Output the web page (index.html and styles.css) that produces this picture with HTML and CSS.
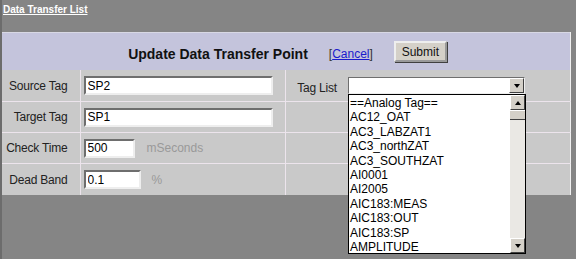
FILE: index.html
```html
<!DOCTYPE html>
<html lang="en">
<head>
    <meta charset="UTF-8">
    <title>Update Data Transfer Point</title>
    <link rel="stylesheet" href="styles.css">
</head>
<body>
    <a class="top-link" href="#">Data Transfer List</a>

    <table class="panel">
        <colgroup>
            <col class="c-label">
            <col class="c-field">
            <col class="c-tag">
            <col>
        </colgroup>
        <tr class="head">
            <td colspan="4">
                <div class="head-inner">
                    <span class="title">Update Data Transfer Point</span>
                    <span class="cancel">[<a href="#">Cancel</a>]</span>
                    <button type="button" class="btn-submit">Submit</button>
                </div>
            </td>
        </tr>
        <tr class="row row-1">
            <td class="lbl">Source Tag</td>
            <td class="fld"><input type="text" class="txt txt-long" value="SP2"></td>
            <td class="lbl lbl-tag"><div class="tag-label">Tag List</div></td>
            <td class="fld-combo">
                <div class="combo">
                    <div class="combo-box">
                        <span class="combo-value"></span>
                        <span class="sb-btn"><span class="tri tri-down"></span></span>
                    </div>
                    <div class="combo-list">
                        <ul class="items">
                            <li>==Analog Tag==</li>
                            <li>AC12_OAT</li>
                            <li>AC3_LABZAT1</li>
                            <li>AC3_northZAT</li>
                            <li>AC3_SOUTHZAT</li>
                            <li>AI0001</li>
                            <li>AI2005</li>
                            <li>AIC183:MEAS</li>
                            <li>AIC183:OUT</li>
                            <li>AIC183:SP</li>
                            <li>AMPLITUDE</li>
                        </ul>
                        <div class="scrollbar">
                            <span class="sb-btn"><span class="tri tri-up"></span></span>
                            <span class="sb-thumb"></span>
                            <span class="sb-track"></span>
                            <span class="sb-btn"><span class="tri tri-down"></span></span>
                        </div>
                    </div>
                </div>
            </td>
        </tr>
        <tr class="row row-2">
            <td class="lbl">Target Tag</td>
            <td class="fld"><input type="text" class="txt txt-long" value="SP1"></td>
            <td></td>
            <td></td>
        </tr>
        <tr class="row row-3">
            <td class="lbl">Check Time</td>
            <td class="fld" colspan="2"><input type="text" class="txt txt-time" value="500"><span class="unit">mSeconds</span></td>
            <td></td>
        </tr>
        <tr class="row row-4">
            <td class="lbl">Dead Band</td>
            <td class="fld" colspan="2"><input type="text" class="txt txt-band" value="0.1"><span class="unit unit-pct">%</span></td>
            <td></td>
        </tr>
    </table>
</body>
</html>
```

FILE: styles.css
```css
/* old-school admin form */
body {
    margin: 0;
    padding: 3px 0 0 0;
    background-color: #858585;
    border-left: 2px solid #6c6c6c;
    min-height: 256px;
    font-family: "Liberation Sans", Arial, sans-serif;
    font-size: 12px;
    color: #1a1a1a;
}

.top-link {
    display: block;
    width: max-content;
    margin-left: 1px;
    color: #ffffff;
    font-size: 10px;
    font-weight: bold;
    line-height: 13px;
    text-decoration: underline;
}

.panel {
    margin-top: 16px;
    width: 569px;
    border-collapse: collapse;
    table-layout: fixed;
    border-top: 1px solid #d8d8e4;
    border-right: 1px solid #f0f0f0;
}

.c-label { width: 78px; }
.c-field { width: 205px; }
.c-tag { width: 63px; }

.panel td {
    padding: 0;
    vertical-align: middle;
}

/* header */
.head td {
    height: 37px;
    background-color: #c4c4dc;
}

.head-inner {
    display: flex;
    align-items: center;
    justify-content: center;
    padding-left: 3px;
}

.title {
    font-size: 14px;
    font-weight: bold;
    color: #111;
    margin-right: 21px;
    margin-top: 4px;
}

.cancel {
    font-size: 12px;
    color: #333;
    margin-top: 4px;
    margin-right: 21px;
}

.cancel a {
    color: #1a1acc;
}

.btn-submit {
    width: 53px;
    height: 21px;
    padding: 0;
    font-family: "Liberation Sans", Arial, sans-serif;
    font-size: 12px;
    color: #111;
    background-color: #d4d0c8;
    border: 2px outset #eeeeee;
    box-shadow: 1px 1px 0 #404040;
}

/* form rows */
.row td {
    background-color: #c9c9c9;
    border-bottom: 1px solid #ece4ec;
}

.row td:first-child,
.row-1 td:nth-child(2),
.row-2 td:nth-child(2) {
    border-right: 1px solid #ece4ec;
}

.row-3 td:nth-child(2),
.row-4 td:nth-child(2) {
    background-image: linear-gradient(#ece4ec, #ece4ec);
    background-size: 1px 100%;
    background-position: 204px 0;
    background-repeat: no-repeat;
}

.row-1 td { height: 31px; }
.row-2 td { height: 30px; }
.row-3 td { height: 30px; }
.row-4 td { height: 31px; border-bottom: none; }

.lbl {
    text-align: right;
    padding-right: 12px !important;
    color: #222;
    letter-spacing: -0.2px;
}

.lbl-tag {
    padding-right: 11px !important;
}

.tag-label {
    padding-top: 5px;
}

.fld {
    padding-left: 3px !important;
}

.fld-combo {
    vertical-align: top !important;
}

.txt {
    box-sizing: border-box;
    height: 19px;
    padding: 0 2px;
    font-family: "Liberation Sans", Arial, sans-serif;
    font-size: 12px;
    color: #000;
    background-color: #ffffff;
    border: 2px solid;
    border-color: #6e6e6e #eeeeee #eeeeee #6e6e6e;
    vertical-align: middle;
}

.txt-long { width: 189px; }
.txt-time { width: 51px; }
.txt-band { width: 57px; }

.unit {
    margin-left: 12px;
    color: #999999;
    vertical-align: middle;
}

.unit-pct {
    margin-left: 11px;
}

/* open select */
.combo {
    position: relative;
    width: 177px;
    margin-top: 7px;
}

.combo-box {
    box-sizing: border-box;
    height: 17px;
    display: flex;
    justify-content: flex-end;
    background-color: #ffffff;
    border: 1px solid;
    border-color: #6e6e6e #eeeeee #eeeeee #6e6e6e;
}

.sb-btn {
    box-sizing: border-box;
    width: 15px;
    height: 15px;
    display: flex;
    align-items: center;
    justify-content: center;
    background-color: #d4d0c8;
    border: 1px solid;
    border-color: #ffffff #404040 #404040 #ffffff;
    flex-shrink: 0;
}

.tri {
    width: 0;
    height: 0;
    border-left: 3px solid transparent;
    border-right: 3px solid transparent;
}

.tri-down { border-top: 4px solid #000; }
.tri-up { border-bottom: 4px solid #000; }

.combo-list {
    position: absolute;
    top: 17px;
    left: 0;
    box-sizing: border-box;
    width: 178px;
    height: 160px;
    display: flex;
    background-color: #ffffff;
    border: 1px solid #000;
}

.items {
    flex: 1;
    margin: 0;
    padding: 1px 0 0 1px;
    list-style: none;
    overflow: hidden;
}

.items li {
    line-height: 14.4px;
    font-size: 12px;
    color: #000;
    white-space: nowrap;
}

.scrollbar {
    width: 15px;
    display: flex;
    flex-direction: column;
    background-color: #eae8e4;
}

.sb-thumb {
    height: 8px;
    background-color: #d4d0c8;
    border-top: 1px solid #ffffff;
    border-bottom: 1px solid #404040;
}

.sb-track {
    flex: 1;
}
```
